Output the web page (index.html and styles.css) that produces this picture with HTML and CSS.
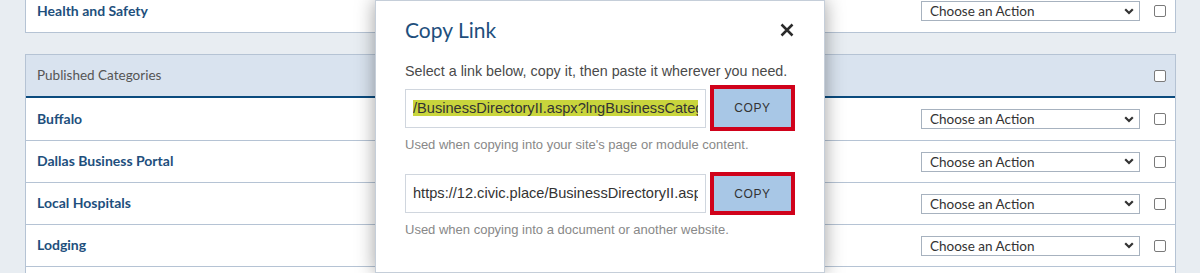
FILE: index.html
```html
<!DOCTYPE html>
<html lang="en">
<head>
<meta charset="utf-8">
<title>Copy Link</title>
<link rel="stylesheet" href="styles.css">
</head>
<body>
<div class="page">
  <div class="card card--cut">
    <div class="row">
      <span class="label">Health and Safety</span>
      <div class="select"><span>Choose an Action</span><svg class="chev" width="10" height="7" viewBox="0 0 10 7"><polyline points="1.2,1.2 5,5 8.8,1.2" fill="none" stroke="#333" stroke-width="2.2"/></svg></div>
      <span class="check"></span>
    </div>
  </div>

  <div class="card card--list">
    <div class="head">
      <span class="head-title">Published Categories</span>
      <span class="check"></span>
    </div>
    <div class="row">
      <span class="label">Buffalo</span>
      <div class="select"><span>Choose an Action</span><svg class="chev" width="10" height="7" viewBox="0 0 10 7"><polyline points="1.2,1.2 5,5 8.8,1.2" fill="none" stroke="#333" stroke-width="2.2"/></svg></div>
      <span class="check"></span>
    </div>
    <div class="row">
      <span class="label">Dallas Business Portal</span>
      <div class="select"><span>Choose an Action</span><svg class="chev" width="10" height="7" viewBox="0 0 10 7"><polyline points="1.2,1.2 5,5 8.8,1.2" fill="none" stroke="#333" stroke-width="2.2"/></svg></div>
      <span class="check"></span>
    </div>
    <div class="row">
      <span class="label">Local Hospitals</span>
      <div class="select"><span>Choose an Action</span><svg class="chev" width="10" height="7" viewBox="0 0 10 7"><polyline points="1.2,1.2 5,5 8.8,1.2" fill="none" stroke="#333" stroke-width="2.2"/></svg></div>
      <span class="check"></span>
    </div>
    <div class="row">
      <span class="label">Lodging</span>
      <div class="select"><span>Choose an Action</span><svg class="chev" width="10" height="7" viewBox="0 0 10 7"><polyline points="1.2,1.2 5,5 8.8,1.2" fill="none" stroke="#333" stroke-width="2.2"/></svg></div>
      <span class="check"></span>
    </div>
    <div class="row"></div>
  </div>
</div>

<div class="modal">
  <div class="modal-head">
    <h2 class="modal-title">Copy Link</h2>
    <svg class="close" width="14" height="14" viewBox="0 0 14 14"><path d="M1.5 1.5 L12.5 12.5 M12.5 1.5 L1.5 12.5" stroke="#2b2b2b" stroke-width="2.5" fill="none"/></svg>
  </div>
  <p class="intro">Select a link below, copy it, then paste it wherever you need.</p>
  <div class="link-row link-row--first">
    <div class="field"><div class="field-text"><mark class="sel">/BusinessDirectoryII.aspx?lngBusinessCategoryID=3</mark></div></div>
    <button class="copy copy--tall">COPY</button>
  </div>
  <p class="hint hint--first">Used when copying into your site's page or module content.</p>
  <div class="link-row link-row--second">
    <div class="field"><div class="field-text">https://12.civic.place/BusinessDirectoryII.aspx?lngBusinessCategoryID=3</div></div>
    <button class="copy copy--short">COPY</button>
  </div>
  <p class="hint hint--second">Used when copying into a document or another website.</p>
</div>
</body>
</html>
```

FILE: styles.css
```css
* { box-sizing: border-box; }

html, body {
  margin: 0;
  padding: 0;
  height: 273px;
  overflow: hidden;
}

body {
  background: #e8edf2;
  font-family: Lato, "Open Sans", Arial, sans-serif;
  color: #333;
}

.page {
  padding: 0 24px 0 25px;
}

.card {
  background: #fff;
  border: 1px solid #b5c3d4;
}

.card--cut {
  margin-top: -11px;
}

.card--list {
  margin-top: 21px;
}

.head {
  display: flex;
  align-items: center;
  height: 43px;
  padding: 0 9px 0 11px;
  background: #d9e3ef;
  border-bottom: 2px solid #0b4b7e;
}

.head-title {
  flex: 1;
  font-size: 13.5px;
  color: #555;
  margin-top: -2px;
}

.row {
  display: flex;
  align-items: center;
  height: 42px;
  padding: 0 9px 0 11px;
}

.row + .row {
  border-top: 1px solid #b5c3d4;
}

.label {
  flex: 1;
  font-size: 14px;
  font-weight: 700;
  color: #1e4f7d;
  margin-top: -2px;
}

.select {
  display: flex;
  align-items: center;
  justify-content: space-between;
  width: 219px;
  height: 20px;
  padding: 0 5px 0 8px;
  border: 1px solid #a7b2bf;
  background: #fff;
  font-size: 13.5px;
  color: #333;
}

.chev {
  display: block;
}

.check {
  width: 12px;
  height: 12px;
  margin-left: 14px;
  border: 1px solid #7a7a7a;
  border-radius: 2px;
  background: #fff;
}

.modal {
  position: absolute;
  left: 375px;
  top: 0;
  width: 450px;
  height: 273px;
  padding: 17px 29px 0 29px;
  background: #fff;
  border: 1px solid #c5ced9;
  box-shadow: 0 0 18px rgba(0, 0, 0, 0.38);
  font-family: "Liberation Sans", Arial, sans-serif;
}

.modal-head {
  display: flex;
  align-items: center;
  justify-content: space-between;
  height: 24px;
}

.modal-title {
  margin: 0;
  font-family: Lato, "Open Sans", sans-serif;
  font-weight: 400;
  font-size: 21px;
  line-height: 24px;
  color: #1e4f7d;
}

.close {
  display: block;
  margin-right: 1px;
}

.intro {
  margin: 20px 0 0;
  font-size: 14.3px;
  line-height: 18px;
  color: #4a4a4a;
}

.link-row {
  display: flex;
  align-items: center;
  gap: 4px;
}

.link-row--first { margin-top: 5px; height: 46px; }
.link-row--second { margin-top: 19px; height: 43px; }

.field {
  width: 301px;
  height: 39px;
  display: flex;
  align-items: center;
  padding: 0 7px 0 7px;
  border: 1px solid #d0d6de;
  background: #fff;
}

.field-text {
  flex: 1;
  overflow: hidden;
  white-space: nowrap;
  font-size: 14.6px;
  line-height: 17px;
  color: #333;
}

.sel {
  background: #c9d53c;
  color: #333;
}

.copy {
  width: 89px;
  padding: 0;
  border: 4px solid #d0021b;
  background: #a8c7e6;
  font-family: "Liberation Sans", Arial, sans-serif;
  font-size: 12px;
  letter-spacing: 0.6px;
  color: #333;
}

.copy--tall { height: 46px; }
.copy--short { height: 43px; }

.hint {
  margin: 0;
  font-size: 13px;
  line-height: 16px;
  color: #888;
}

.hint--first { margin-top: 6px; }
.hint--second { margin-top: 7px; }
```
